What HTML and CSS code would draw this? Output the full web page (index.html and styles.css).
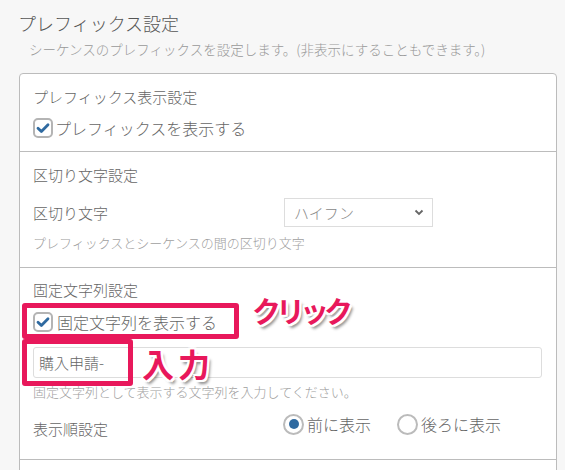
FILE: index.html
```html
<!DOCTYPE html>
<html lang="ja">
<head>
<meta charset="utf-8">
<title>プレフィックス設定</title>
<link rel="stylesheet" href="styles.css">
</head>
<body>
<div class="wrap">
  <h1 class="title">プレフィックス設定</h1>
  <p class="sub">シーケンスのプレフィックスを設定します。(非表示にすることもできます。)</p>
  <div class="panel">
    <div class="section s1">
      <div class="sec-title">プレフィックス表示設定</div>
      <label class="check">
        <span class="box"><svg viewBox="0 0 20 20" width="20" height="20"><rect x="1" y="1" width="18" height="18" rx="4" fill="#fff" stroke="#b4b4b4" stroke-width="2"/><path d="M5 10.2 L8.4 13.6 L15 6.8" fill="none" stroke="#2f6aa0" stroke-width="2.8" stroke-linecap="round" stroke-linejoin="round"/></svg></span>
        <span class="check-label">プレフィックスを表示する</span>
      </label>
    </div>
    <div class="section s2">
      <div class="sec-title">区切り文字設定</div>
      <div class="row">
        <div class="row-label">区切り文字</div>
        <div class="select"><span>ハイフン</span><svg class="chev" viewBox="0 0 10 7" width="10" height="7"><path d="M1.5 1.5 L5 5 L8.5 1.5" fill="none" stroke="#666" stroke-width="1.8"/></svg></div>
      </div>
      <div class="help">プレフィックスとシーケンスの間の区切り文字</div>
    </div>
    <div class="section s3">
      <div class="sec-title">固定文字列設定</div>
      <label class="check">
        <span class="box"><svg viewBox="0 0 20 20" width="20" height="20"><rect x="1" y="1" width="18" height="18" rx="4" fill="#fff" stroke="#b4b4b4" stroke-width="2"/><path d="M5 10.2 L8.4 13.6 L15 6.8" fill="none" stroke="#2f6aa0" stroke-width="2.8" stroke-linecap="round" stroke-linejoin="round"/></svg></span>
        <span class="check-label">固定文字列を表示する</span>
      </label>
      <div class="input">購入申請-</div>
      <div class="help help-tight">固定文字列として表示する文字列を入力してください。</div>
      <div class="order">
        <div class="order-label">表示順設定</div>
        <div class="radios">
          <span class="radio on"><span class="dot"></span></span><span class="radio-label">前に表示</span>
          <span class="radio"></span><span class="radio-label">後ろに表示</span>
        </div>
      </div>
      <div class="mark mark-click"></div>
      <div class="mark mark-input"></div>
      <div class="note note-click">クリック</div>
      <div class="note note-input">入力</div>
    </div>
    <div class="section s4"></div>
  </div>
</div>
</body>
</html>
```
FILE: styles.css
```css
* { box-sizing: border-box; }
html, body { margin: 0; padding: 0; }
body {
  background: #f7f7f7;
  font-family: "Noto Sans CJK JP", "Noto Sans", sans-serif;
  font-weight: 300;
  color: #666;
  overflow: hidden;
}
.wrap {
  padding: 10px 8px 0 18px;
}
.title {
  margin: 0;
  font-size: 18px;
  font-weight: 300;
  line-height: 26px;
  color: #555;
}
.sub {
  margin: 4px 0 0 11px;
  font-size: 13.5px;
  line-height: 18px;
  color: #999;
}
.panel {
  margin: 15px 0 0 1px;
  width: 538px;
  background: #fff;
  border: 1px solid #bcbcbc;
  border-radius: 4px;
}
.section {
  position: relative;
  padding: 13px 13px 13px 13px;
  border-bottom: 1px solid #bcbcbc;
}
.sec-title {
  font-size: 15px;
  line-height: 20px;
  color: #666;
}
.check {
  display: flex;
  align-items: center;
  margin-top: 11px;
  height: 20px;
}
.box { display: block; width: 20px; height: 20px; }
.box svg { display: block; }
.check-label {
  margin-left: 2px;
  font-size: 16px;
  line-height: 20px;
  color: #666;
}
.s2 { padding-bottom: 15px; }
.row {
  display: grid;
  grid-template-columns: 251px 149px;
  align-items: center;
  margin-top: 13px;
}
.row-label { font-size: 15px; line-height: 20px; color: #666; }
.select {
  height: 29px;
  border: 1px solid #ddd;
  background: #fff;
  display: flex;
  align-items: center;
  justify-content: space-between;
  padding: 0 8px 0 9px;
  font-size: 15px;
  color: #888;
}
.chev { display: block; }
.help {
  margin-top: 7px;
  font-size: 13px;
  line-height: 18px;
  color: #a0a0a0;
}
.s3 { padding: 12px 13px 20px 13px; }
.s3 .check { margin-top: 12px; }
.s3 .check-label { margin-left: 4px; }
.input {
  margin-top: 15px;
  width: 509px;
  height: 31px;
  border: 1px solid #ddd;
  border-radius: 3px;
  padding: 0 5px;
  font-size: 15px;
  line-height: 29px;
  color: #666;
}
.help-tight { margin-top: 5px; }
.order {
  display: grid;
  grid-template-columns: 250px auto;
  margin-top: 12px;
  height: 26px;
}
.order-label {
  padding-top: 6px;
  font-size: 15px;
  line-height: 20px;
  color: #666;
}
.radios {
  display: flex;
  align-items: center;
  height: 22px;
}
.radio {
  width: 21px;
  height: 21px;
  border: 2px solid #bbb;
  border-radius: 50%;
  background: #fff;
  display: flex;
  align-items: center;
  justify-content: center;
}
.dot {
  width: 10px;
  height: 10px;
  border-radius: 50%;
  background: #2f6aa0;
}
.radio-label {
  margin-left: 3px;
  margin-right: 26px;
  font-size: 16px;
  line-height: 20px;
  color: #666;
}
.s4 { height: 12px; border-bottom: none; }
.mark {
  position: absolute;
  border: 5px solid #e8185b;
  border-radius: 3px;
}
.mark-click { left: 2px; top: 35px; width: 217px; height: 36px; }
.mark-input { left: 2px; top: 71px; width: 111px; height: 47px; }
.note {
  position: absolute;
  font-weight: 700;
  color: #e8185b;
  line-height: 1;
  white-space: nowrap;
  text-shadow:
    -2px -2px 0 #fff, 2px -2px 0 #fff, -2px 2px 0 #fff, 2px 2px 0 #fff,
    0 -2px 0 #fff, 0 2px 0 #fff, -2px 0 0 #fff, 2px 0 0 #fff,
    3px 4px 3px rgba(0,0,0,0.45);
}
.note-click { left: 232px; top: 28px; font-size: 29px; letter-spacing: -5px; }
.note-input { left: 122px; top: 79px; font-size: 32px; letter-spacing: 4px; }
```
